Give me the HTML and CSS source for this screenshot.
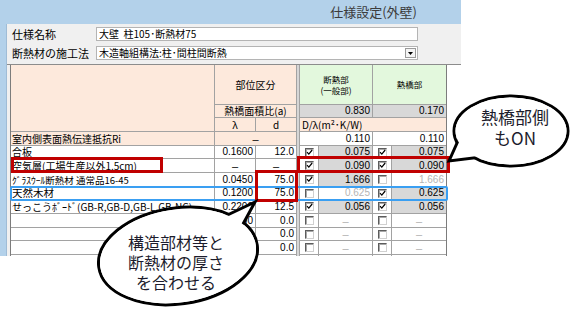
FILE: index.html
```html
<!DOCTYPE html>
<html lang="ja">
<head>
<meta charset="utf-8">
<link rel="stylesheet" href="styles.css">
</head>
<body>
<div class="page">
  <div class="window">
    <div class="titlebar"><span class="title">仕様設定(外壁)</span></div>
    <div class="body">
      <div class="frame-left"></div>
      <div class="content">
        <div class="form">
          <div class="form-row"><span class="lbl">仕様名称</span><div class="field">大壁&nbsp;&nbsp;柱105･断熱材75</div></div>
          <div class="form-row"><span class="lbl">断熱材の施工法</span><div class="field select"><span>木造軸組構法:柱･間柱間断熱</span><span class="dd"><svg width="5" height="3" viewBox="0 0 5 3"><path d="M0 0H5L2.5 3Z" fill="#000"/></svg></span></div></div>
        </div>
        <div class="table-area">
          <div class="grid">
            <div class="sep"></div>
            <!-- header row 1 -->
            <div class="c peach namehead"></div>
            <div class="c peach span2 ctr hd1">部位区分</div>
            <div class="c green span2 ctr hd2">断熱部<br>(一般部)</div>
            <div class="c green span2 ctr hd2">熱橋部</div>
            <!-- header row 2 -->
            <div class="c peach span2 ctr">熱橋面積比(a)</div>
            <div class="c gray span2 num">0.830</div>
            <div class="c gray span2 num">0.170</div>
            <!-- header row 3 -->
            <div class="c peach ctr">λ</div>
            <div class="c peach ctr">d</div>
            <div class="c peach span4 left">D/λ(m²･K/W)</div>
            <!-- Ri row -->
            <div class="c peach name">室内側表面熱伝達抵抗Ri</div>
            <div class="c peach span2 ctr"><span class="dash">–</span></div>
            <div class="c span2 num">0.110</div>
            <div class="c span2 num">0.110</div>

            <div class="c name">合板</div>
            <div class="c num">0.1600</div>
            <div class="c num">12.0</div>
            <div class="c ck"><span class="cb on"><svg width="7" height="7" viewBox="0 0 7 7"><path d="M1 3.2L2.8 5.2L6.2 1" fill="none" stroke="#000" stroke-width="1.2"/></svg></span></div>
            <div class="c gray num">0.075</div>
            <div class="c ck"><span class="cb on"><svg width="7" height="7" viewBox="0 0 7 7"><path d="M1 3.2L2.8 5.2L6.2 1" fill="none" stroke="#000" stroke-width="1.2"/></svg></span></div>
            <div class="c gray num">0.075</div>

            <div class="c name">空気層(工場生産以外1.5cm)</div>
            <div class="c ctr"><span class="dash">–</span></div>
            <div class="c ctr"><span class="dash">–</span></div>
            <div class="c ck"><span class="cb on"><svg width="7" height="7" viewBox="0 0 7 7"><path d="M1 3.2L2.8 5.2L6.2 1" fill="none" stroke="#000" stroke-width="1.2"/></svg></span></div>
            <div class="c gray num">0.090</div>
            <div class="c ck"><span class="cb on"><svg width="7" height="7" viewBox="0 0 7 7"><path d="M1 3.2L2.8 5.2L6.2 1" fill="none" stroke="#000" stroke-width="1.2"/></svg></span></div>
            <div class="c gray num">0.090</div>

            <div class="c name small">ｸﾞﾗｽｳｰﾙ断熱材 通常品16-45</div>
            <div class="c num">0.0450</div>
            <div class="c num">75.0</div>
            <div class="c ck"><span class="cb on"><svg width="7" height="7" viewBox="0 0 7 7"><path d="M1 3.2L2.8 5.2L6.2 1" fill="none" stroke="#000" stroke-width="1.2"/></svg></span></div>
            <div class="c gray num">1.666</div>
            <div class="c ck"><span class="cb"></span></div>
            <div class="c num dim">1.666</div>

            <div class="c name big">天然木材</div>
            <div class="c num">0.1200</div>
            <div class="c num">75.0</div>
            <div class="c ck"><span class="cb"></span></div>
            <div class="c num dim">0.625</div>
            <div class="c ck"><span class="cb on"><svg width="7" height="7" viewBox="0 0 7 7"><path d="M1 3.2L2.8 5.2L6.2 1" fill="none" stroke="#000" stroke-width="1.2"/></svg></span></div>
            <div class="c gray num">0.625</div>

            <div class="c name">せっこうﾎﾞｰﾄﾞ(GB-R,GB-D,GB-L,GB-NC)</div>
            <div class="c num">0.2200</div>
            <div class="c num">12.5</div>
            <div class="c ck"><span class="cb on"><svg width="7" height="7" viewBox="0 0 7 7"><path d="M1 3.2L2.8 5.2L6.2 1" fill="none" stroke="#000" stroke-width="1.2"/></svg></span></div>
            <div class="c gray num">0.056</div>
            <div class="c ck"><span class="cb on"><svg width="7" height="7" viewBox="0 0 7 7"><path d="M1 3.2L2.8 5.2L6.2 1" fill="none" stroke="#000" stroke-width="1.2"/></svg></span></div>
            <div class="c gray num">0.056</div>

            <div class="c name"></div>
            <div class="c num">0.0000</div>
            <div class="c num">0.0</div>
            <div class="c ck"><span class="cb"></span></div>
            <div class="c ctr"><span class="dash light">–</span></div>
            <div class="c ck"><span class="cb"></span></div>
            <div class="c ctr"><span class="dash light">–</span></div>

            <div class="c name"></div>
            <div class="c num">0.0000</div>
            <div class="c num">0.0</div>
            <div class="c ck"><span class="cb"></span></div>
            <div class="c ctr"><span class="dash light">–</span></div>
            <div class="c ck"><span class="cb"></span></div>
            <div class="c ctr"><span class="dash light">–</span></div>

            <div class="c name"></div>
            <div class="c num">0.0000</div>
            <div class="c num">0.0</div>
            <div class="c ck"><span class="cb"></span></div>
            <div class="c ctr"><span class="dash light">–</span></div>
            <div class="c ck"><span class="cb"></span></div>
            <div class="c ctr"><span class="dash light">–</span></div>

            <div class="c name"></div>
            <div class="c num">0.0000</div>
            <div class="c num">0.0</div>
            <div class="c ck"><span class="cb"></span></div>
            <div class="c ctr"><span class="dash light">–</span></div>
            <div class="c ck"><span class="cb"></span></div>
            <div class="c ctr"><span class="dash light">–</span></div>
          </div>
        </div>
      </div>
    </div>
  </div>

  <div class="hl blue-row"></div>
  <div class="hl red-name"></div>
  <div class="hl red-vals"></div>
  <div class="hl red-d"></div>

  <svg class="bubbles" width="572" height="319" viewBox="0 0 572 319">
    <g fill="#fff" stroke="#000" stroke-width="3" stroke-linejoin="miter">
      <ellipse cx="511" cy="131" rx="57" ry="35"/>
      <path d="M449 161L462 132L490 156Z"/>
      <ellipse cx="511" cy="131" rx="55.5" ry="33.5" stroke="none"/>

      <ellipse cx="178" cy="256" rx="80" ry="48" transform="rotate(-8 178 256)"/>
      <path d="M255 202L200 228L230 248Z"/>
      <ellipse cx="178" cy="256" rx="78.5" ry="46.5" transform="rotate(-8 178 256)" stroke="none"/>
    </g>
  </svg>
  <div class="note note-top">熱橋部側<br>もON</div>
  <div class="note note-bottom">構造部材等と<br>断熱材の厚さ<br>を合わせる</div>
</div>
</body>
</html>
```

FILE: styles.css
```css
* { box-sizing: border-box; }
body {
  margin: 0;
  background: #fff;
  font-family: "Noto Sans CJK JP", sans-serif;
  color: #000;
}
.page {
  position: relative;
  width: 572px;
  height: 319px;
  overflow: hidden;
}
.window {
  width: 461px;
  height: 256px;
  display: flex;
  flex-direction: column;
  overflow: hidden;
}
.titlebar {
  height: 24px;
  flex: none;
  background: #b3d1ea;
  display: flex;
  align-items: center;
  justify-content: flex-end;
  padding-right: 44px;
}
.title {
  font-size: 13px;
  line-height: 16px;
  color: #3c3c3c;
}
.body {
  flex: 1;
  display: flex;
  min-height: 0;
}
.frame-left {
  width: 7px;
  flex: none;
  background: #b3d1ea;
  border-right: 1px solid #9fbcd6;
}
.content {
  flex: 1;
  display: flex;
  flex-direction: column;
  min-width: 0;
}
.form {
  height: 40px;
  flex: none;
  background: #f0f0f0;
  padding: 3px 0 0 5px;
  display: flex;
  flex-direction: column;
  gap: 5px;
}
.form-row {
  display: flex;
  align-items: center;
  height: 14px;
}
.lbl {
  width: 84px;
  font-size: 11px;
  line-height: 14px;
  white-space: nowrap;
}
.field {
  width: 322px;
  height: 14px;
  background: #fff;
  border: 1px solid #b4b4b4;
  font-size: 10px;
  line-height: 12px;
  padding-left: 2px;
  display: flex;
  align-items: center;
  white-space: nowrap;
}
.select .dd {
  margin-left: auto;
  margin-right: 1px;
  width: 11px;
  height: 10px;
  border: 1px solid #9a9a9a;
  background: #f4f4f4;
  display: flex;
  align-items: center;
  justify-content: center;
}
.table-area {
  flex: 1;
  min-height: 0;
  border-top: 1px solid #8c8c8c;
  padding-left: 3px;
  background: linear-gradient(to right, #f0f0f0 3px, #fff 3px);
}
.grid {
  width: 437px;
  display: grid;
  grid-template-columns: 203px 40px 40px 2px 18px 53px 18px 54px;
  grid-template-rows: 39px 12px 13px 13px 12px 13px 13px 12px 13px 13px 12px 13px 13px;
  gap: 1px;
  background: #a2a2a2;
  border: 1px solid #7c7c7c;
  border-top: none;
}
.sep {
  grid-column: 4;
  grid-row: 1 / -1;
  background: #d6d6d6;
}
.c {
  background: #fff;
  font-size: 10px;
  line-height: 12px;
  display: flex;
  align-items: center;
  white-space: nowrap;
  min-width: 0;
}
.peach { background: #fde9dc; }
.green { background: #e3f8dd; }
.gray { background: #d8d8d8; }
.namehead { grid-row: span 3; }
.span2 { grid-column: span 2; }
.span4 { grid-column: span 4; }
.ctr { justify-content: center; text-align: center; }
.left { padding-left: 2px; }
.name { padding-left: 1px; }
.name.small { font-size: 9.5px; }
.name.big { font-size: 10.5px; }
.hd1 { font-size: 10px; }
.hd2 { font-size: 8.5px; line-height: 11px; }
.num {
  justify-content: flex-end;
  padding-right: 2px;
  font-family: "Liberation Sans", "Noto Sans CJK JP", sans-serif;
  font-size: 10px;
}
.dim { color: #b4b4b4; }
.dash {
  font-family: "Liberation Sans", sans-serif;
  font-size: 11px;
  color: #000;
}
.dash.light { color: #b0b0b0; }
.ck { justify-content: center; }
.cb {
  width: 9px;
  height: 9px;
  background: #fff;
  border: 1px solid;
  border-color: #5c5c5c #d0d0d0 #d0d0d0 #5c5c5c;
  box-shadow: inset 1px 1px 0 #a8a8a8;
  display: flex;
  align-items: center;
  justify-content: center;
}
.cb svg { display: block; }

.hl {
  position: absolute;
  pointer-events: none;
}
.blue-row {
  left: 10px;
  top: 186px;
  width: 438px;
  height: 15px;
  border: 2px solid #3a9ff2;
  border-radius: 2px;
}
.red-name {
  left: 11px;
  top: 157px;
  width: 152px;
  height: 16px;
  border: 3px solid #c00000;
}
.red-vals {
  left: 297px;
  top: 156px;
  width: 153px;
  height: 17px;
  border: 3px solid #c00000;
}
.red-d {
  left: 255px;
  top: 170px;
  width: 43px;
  height: 32px;
  border: 3px solid #c00000;
}
.bubbles {
  position: absolute;
  left: 0;
  top: 0;
  pointer-events: none;
}
.note {
  position: absolute;
  text-align: center;
  color: #1c1c2c;
  white-space: nowrap;
}
.note-top {
  left: 455px;
  top: 106px;
  width: 120px;
  font-size: 17px;
  line-height: 21px;
}
.note-bottom {
  left: 116px;
  top: 232px;
  width: 120px;
  font-size: 16px;
  line-height: 20px;
}
```
